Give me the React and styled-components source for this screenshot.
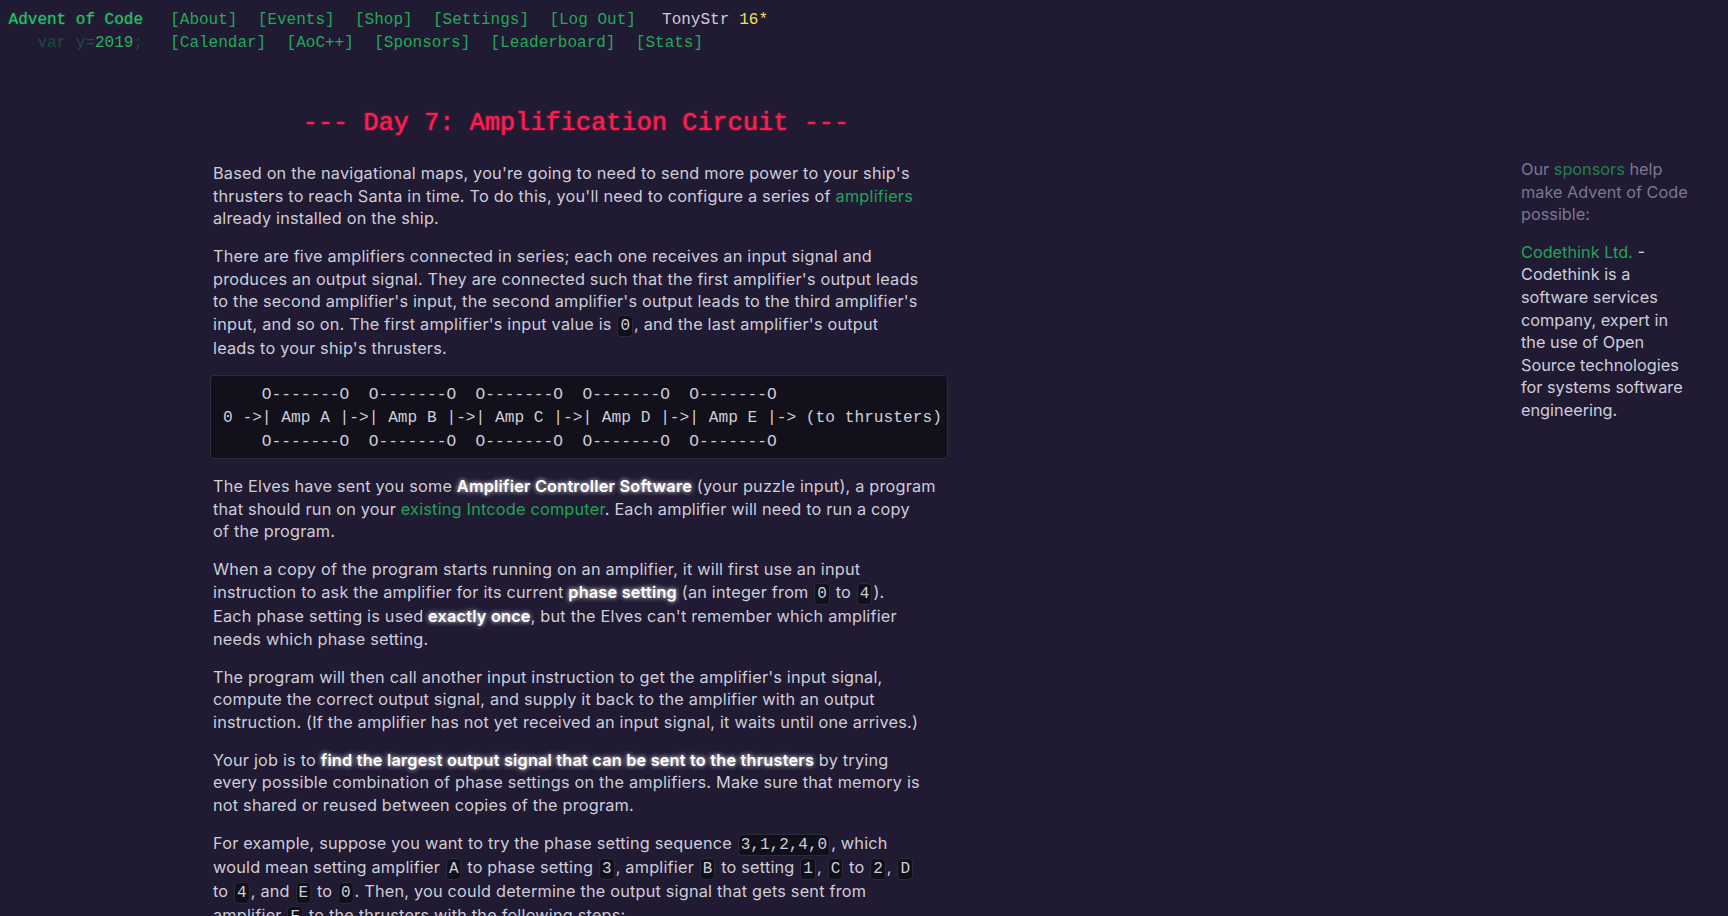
import React from "react";
import styled, { createGlobalStyle } from "styled-components";

const GlobalStyle = createGlobalStyle`
  html, body {
    margin: 0;
    padding: 0;
    background: #201a33;
    color: #cfcdd8;
  }
  body {
    font-family: "Inter", "Open Sans", sans-serif;
    font-size: 16.3px;
    line-height: 22.6px;
  }
  ::-webkit-scrollbar {
    width: 8px;
  }
  ::-webkit-scrollbar-track {
    background: #201a33;
  }
  ::-webkit-scrollbar-thumb {
    background: #15111f;
  }
`;

const mono = `"Liberation Mono", "DejaVu Sans Mono", monospace`;

const Header = styled.header`
  padding: 9px 0 0 8px;
  font-family: ${mono};
  font-size: 16px;
  line-height: 23px;
  white-space: nowrap;
`;

const HeaderRow = styled.div`
  display: flex;
  align-items: baseline;
`;

const Brand = styled.h1`
  margin: 0 17px 0 0;
  width: 135px;
  font-size: 16px;
  font-weight: normal;
  text-align: right;
  color: ${(p) => (p.$glow ? "#2cbf68" : "#26b060")};
  text-shadow: ${(p) => (p.$glow ? "0 0 2px rgba(44, 191, 104, 0.6)" : "none")};
`;

const Faded = styled.span`
  color: #1d4c37;
`;

const Nav = styled.nav`
  display: flex;
  align-items: baseline;
`;

const NavLink = styled.a`
  padding: 0 10.2px;
  color: #24a85a;
  text-decoration: none;
`;

const User = styled.span`
  margin-left: 16px;
  color: #cfcdd8;
`;

const StarCount = styled.span`
  margin-left: 10px;
  color: #f4e04d;
`;

const Layout = styled.div`
  display: flex;
  align-items: flex-start;
`;

const Main = styled.main`
  margin-left: 213px;
  width: 735px;
  padding-bottom: 2400px;
  letter-spacing: 0.2px;
`;

const Title = styled.h2`
  margin: 54px 0 23px;
  padding-right: 9px;
  font-family: ${mono};
  font-size: 25.3px;
  line-height: 30px;
  font-weight: normal;
  letter-spacing: 0;
  text-align: center;
  color: #ff1f4f;
  text-shadow: 0 0 2px #ff1f4f;
`;

const Para = styled.p`
  margin: 0 0 15.5px;
  white-space: nowrap;
`;

const Link = styled.a`
  color: #22a456;
  text-decoration: none;
`;

const Em = styled.em`
  font-style: normal;
  font-weight: 600;
  color: #ffffff;
  text-shadow: 0 0 5px #ffffff;
`;

const Code = styled.code`
  display: inline-block;
  padding: 0 2px;
  margin: 0 1px;
  font-family: ${mono};
  font-size: 16px;
  line-height: 20px;
  letter-spacing: 0;
  background: #10101a;
  border: 1px solid #2c2a38;
  border-radius: 4px;
`;

const Pre = styled.pre`
  margin: 15px 0 16px -3px;
  padding: 8px 12px 4px;
  font-family: ${mono};
  font-size: 16.2px;
  line-height: 23.3px;
  letter-spacing: 0;
  background: #12101b;
  border: 1px solid #2f2d3a;
  border-radius: 4px;
  color: #cfcdd8;
`;

const List = styled.ul`
  margin: 0 0 15.5px;
  padding-left: 40px;
`;

const Sidebar = styled.aside`
  margin: 103px 33px 0 auto;
  width: 174px;
  font-size: 16.3px;
  line-height: 22.6px;
`;

const SideIntro = styled.p`
  margin: 0 0 15px;
  color: #7b7890;
`;

const SideLink = styled.a`
  color: ${(p) => (p.$dim ? "#2a7d4d" : "#22a456")};
  text-decoration: none;
`;

const SideText = styled.p`
  margin: 0;
  color: #cfcdd8;
`;

const navTop = ["About", "Events", "Shop", "Settings", "Log Out"];
const navBottom = ["Calendar", "AoC++", "Sponsors", "Leaderboard", "Stats"];

export default function App() {
  return (
    <>
      <GlobalStyle />
      <Header>
        <HeaderRow>
          <Brand $glow>Advent of Code</Brand>
          <Nav>
            {navTop.map((n) => (
              <NavLink key={n} href="#">[{n}]</NavLink>
            ))}
            <User>TonyStr</User>
            <StarCount>16*</StarCount>
          </Nav>
        </HeaderRow>
        <HeaderRow>
          <Brand>
            <Faded>var y=</Faded>2019<Faded>;</Faded>
          </Brand>
          <Nav>
            {navBottom.map((n) => (
              <NavLink key={n} href="#">[{n}]</NavLink>
            ))}
          </Nav>
        </HeaderRow>
      </Header>
      <Layout>
        <Main>
          <Title>--- Day 7: Amplification Circuit ---</Title>
          <Para>
            Based on the navigational maps, you're going to need to send more power to your ship's<br />
            thrusters to reach Santa in time. To do this, you'll need to configure a series of{" "}
            <Link href="#">amplifiers</Link><br />
            already installed on the ship.
          </Para>
          <Para>
            There are five amplifiers connected in series; each one receives an input signal and<br />
            produces an output signal. They are connected such that the first amplifier's output leads<br />
            to the second amplifier's input, the second amplifier's output leads to the third amplifier's<br />
            input, and so on. The first amplifier's input value is <Code>0</Code>, and the last amplifier's output<br />
            leads to your ship's thrusters.
          </Para>
          <Pre>
{`    O-------O  O-------O  O-------O  O-------O  O-------O
0 ->| Amp A |->| Amp B |->| Amp C |->| Amp D |->| Amp E |-> (to thrusters)
    O-------O  O-------O  O-------O  O-------O  O-------O`}
          </Pre>
          <Para>
            The Elves have sent you some <Em>Amplifier Controller Software</Em> (your puzzle input), a program<br />
            that should run on your <Link href="#">existing Intcode computer</Link>. Each amplifier will need to run a copy<br />
            of the program.
          </Para>
          <Para>
            When a copy of the program starts running on an amplifier, it will first use an input<br />
            instruction to ask the amplifier for its current <Em>phase setting</Em> (an integer from{" "}
            <Code>0</Code> to <Code>4</Code>).<br />
            Each phase setting is used <Em>exactly once</Em>, but the Elves can't remember which amplifier<br />
            needs which phase setting.
          </Para>
          <Para>
            The program will then call another input instruction to get the amplifier's input signal,<br />
            compute the correct output signal, and supply it back to the amplifier with an output<br />
            instruction. (If the amplifier has not yet received an input signal, it waits until one arrives.)
          </Para>
          <Para>
            Your job is to <Em>find the largest output signal that can be sent to the thrusters</Em> by trying<br />
            every possible combination of phase settings on the amplifiers. Make sure that memory is<br />
            not shared or reused between copies of the program.
          </Para>
          <Para>
            For example, suppose you want to try the phase setting sequence <Code>3,1,2,4,0</Code>, which<br />
            would mean setting amplifier <Code>A</Code> to phase setting <Code>3</Code>, amplifier{" "}
            <Code>B</Code> to setting <Code>1</Code>, <Code>C</Code> to <Code>2</Code>, <Code>D</Code><br />
            to <Code>4</Code>, and <Code>E</Code> to <Code>0</Code>. Then, you could determine the output signal that gets sent from<br />
            amplifier <Code>E</Code> to the thrusters with the following steps:
          </Para>
          <List>
            <li>
              Start the copy of the amplifier controller software that will run on amplifier{" "}
              <Code>A</Code>. At its first input instruction, provide it the amplifier's phase
              setting, <Code>3</Code>. At its second input instruction, provide it the input signal,{" "}
              <Code>0</Code>. After some calculations, it will use an output instruction to indicate
              the amplifier's output signal.
            </li>
            <li>
              Start the software for amplifier <Code>B</Code>. Provide it the phase setting (
              <Code>1</Code>) and then whatever output signal was produced from amplifier{" "}
              <Code>A</Code>. It will then produce a new output signal destined for amplifier{" "}
              <Code>C</Code>.
            </li>
          </List>
        </Main>
        <Sidebar>
          <SideIntro>
            Our <SideLink href="#" $dim>sponsors</SideLink> help make Advent of Code possible:
          </SideIntro>
          <SideText>
            <SideLink href="#">Codethink Ltd.</SideLink> - Codethink is a software services
            company, expert in the use of Open Source technologies for systems software engineering.
          </SideText>
        </Sidebar>
      </Layout>
    </>
  );
}
